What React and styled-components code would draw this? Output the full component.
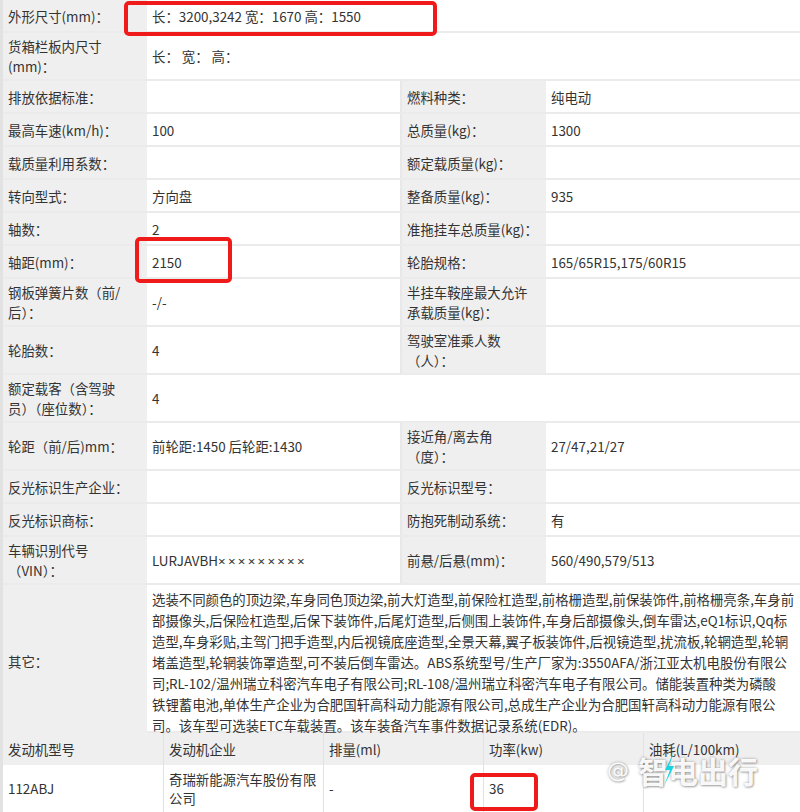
import styled, { createGlobalStyle } from "styled-components"

const GlobalStyle = createGlobalStyle`
  html, body {
    margin: 0;
    padding: 0;
    background: #fff;
  }
`

const Sheet = styled.div`
  position: relative;
  width: 800px;
  height: 812px;
  overflow: hidden;
  font-family: "Noto Sans CJK SC", "Microsoft YaHei", sans-serif;
  font-size: 13.4px;
  color: #333;
  background: #fff;
`

const SpecTable = styled.div`
  border-left: 3px solid #e2e2e2;
`

const rowHeights = { s: 33, m: 48, l: 148 }

const Row = styled.div`
  display: grid;
  grid-template-columns: 144px 255px 144px 1fr;
  box-sizing: border-box;
  height: ${p => rowHeights[p.$size]}px;
  border-bottom: 2px solid #ebebeb;
`

const Label = styled.div`
  display: flex;
  align-items: center;
  padding: 0 5px;
  background: #efefef;
  line-height: 20px;
  white-space: nowrap;
`

const Value = styled.div`
  display: flex;
  align-items: center;
  padding: 0 5px;
  line-height: 20px;
  white-space: nowrap;
  grid-column: ${p => (p.$wide ? "span 3" : "auto")};
  border-right: ${p => (p.$edge ? "2px solid #e8e8e8" : "none")};
`

// masked VIN digits are narrow multiplication signs
const Masked = styled.span`
  font-family: "Noto Sans", "Liberation Sans", sans-serif;
  letter-spacing: 2.2px;
`

const Note = styled.div`
  grid-column: span 3;
  padding: 4px 5px 0;
  line-height: 21px;
`

const NoteLine = styled.span`
  display: block;
  white-space: nowrap;
`

const EngineRow = styled.div`
  display: grid;
  grid-template-columns: 160px 160px 160px 160px 1fr;
  height: ${p => (p.$head ? 32 : 47)}px;
  background: ${p => (p.$head ? "#efefef" : "#fff")};
  border-left: 3px solid #e2e2e2;
`

const EngineCell = styled.div`
  display: flex;
  align-items: center;
  padding: 0 5px;
  line-height: 19px;
  & + & {
    border-left: 1px solid #e2e2e2;
  }
`

const Mark = styled.div`
  position: absolute;
  left: ${p => p.$x}px;
  top: ${p => p.$y}px;
  width: ${p => p.$w}px;
  height: ${p => p.$h}px;
  box-sizing: border-box;
  border: 4px solid #ef1b1b;
  border-radius: 5px;
`

const Watermark = styled.div`
  position: absolute;
  left: 607px;
  top: 748px;
  display: flex;
  align-items: center;
  gap: 9px;
  color: rgba(255, 255, 255, 0.96);
  text-shadow: 0 0 3px rgba(0, 0, 0, 0.35), 1px 1px 2px rgba(0, 0, 0, 0.25);
`

const At = styled.span`
  font-family: "DejaVu Sans", sans-serif;
  font-size: 22px;
`

const Brand = styled.span`
  position: relative;
  font-size: 30px;
  font-weight: 700;
`

const Bolt = styled.svg`
  position: absolute;
  left: 24px;
  top: 4px;
`

const lines = text =>
  text.split("\n").map((t, i, all) => (
    <span key={i}>
      {t}
      {i < all.length - 1 && <br />}
    </span>
  ))

const Cell = ({ as: Comp, children, ...rest }) => (
  <Comp {...rest}>
    <span>{typeof children === "string" ? lines(children) : children}</span>
  </Comp>
)

const specs = [
  { size: "s", l1: "外形尺寸(mm)：", v1: "长：3200,3242 宽：1670 高：1550", wide: true },
  { size: "m", l1: "货箱栏板内尺寸\n(mm)：", v1: "长： 宽： 高：", wide: true },
  { size: "s", l1: "排放依据标准：", v1: "", l2: "燃料种类：", v2: "纯电动" },
  { size: "s", l1: "最高车速(km/h)：", v1: "100", l2: "总质量(kg)：", v2: "1300" },
  { size: "s", l1: "载质量利用系数：", v1: "", l2: "额定载质量(kg)：", v2: "" },
  { size: "s", l1: "转向型式：", v1: "方向盘", l2: "整备质量(kg)：", v2: "935" },
  { size: "s", l1: "轴数：", v1: "2", l2: "准拖挂车总质量(kg)：", v2: "" },
  { size: "s", l1: "轴距(mm)：", v1: "2150", l2: "轮胎规格：", v2: "165/65R15,175/60R15" },
  { size: "m", l1: "钢板弹簧片数（前/\n后）：", v1: "-/-", l2: "半挂车鞍座最大允许\n承载质量(kg)：", v2: "" },
  { size: "m", l1: "轮胎数：", v1: "4", l2: "驾驶室准乘人数\n（人）：", v2: "" },
  { size: "m", l1: "额定载客（含驾驶\n员）（座位数）：", v1: "4", half: true },
  { size: "m", l1: "轮距（前/后)mm：", v1: "前轮距:1450 后轮距:1430", l2: "接近角/离去角\n（度）：", v2: "27/47,21/27" },
  { size: "s", l1: "反光标识生产企业：", v1: "", l2: "反光标识型号：", v2: "" },
  { size: "s", l1: "反光标识商标：", v1: "", l2: "防抱死制动系统：", v2: "有" },
  {
    size: "m",
    l1: "车辆识别代号\n（VIN）：",
    v1: (
      <>
        LURJAVBH<Masked>×××××××××</Masked>
      </>
    ),
    l2: "前悬/后悬(mm)：",
    v2: "560/490,579/513",
  },
]

const noteText = [
  "选装不同颜色的顶边梁,车身同色顶边梁,前大灯造型,前保险杠造型,前格栅造型,前保装饰件,前格栅亮条,车身前",
  "部摄像头,后保险杠造型,后保下装饰件,后尾灯造型,后侧围上装饰件,车身后部摄像头,倒车雷达,eQ1标识,Qq标",
  "造型,车身彩贴,主驾门把手造型,内后视镜底座造型,全景天幕,翼子板装饰件,后视镜造型,扰流板,轮辋造型,轮辋",
  "堵盖造型,轮辋装饰罩造型,可不装后倒车雷达。ABS系统型号/生产厂家为:3550AFA/浙江亚太机电股份有限公",
  "司;RL-102/温州瑞立科密汽车电子有限公司;RL-108/温州瑞立科密汽车电子有限公司。储能装置种类为磷酸",
  "铁锂蓄电池,单体生产企业为合肥国轩高科动力能源有限公司,总成生产企业为合肥国轩高科动力能源有限公",
  "司。该车型可选装ETC车载装置。该车装备汽车事件数据记录系统(EDR)。",
]

const engineHead = ["发动机型号", "发动机企业", "排量(ml)", "功率(kw)", "油耗(L/100km)"]
const engineRow = ["112ABJ", "奇瑞新能源汽车股份有限\n公司", "-", "36", ""]

export default function App() {
  return (
    <Sheet>
      <GlobalStyle />
      <SpecTable>
        {specs.map((r, i) => (
          <Row key={i} $size={r.size}>
            <Cell as={Label}>{r.l1}</Cell>
            {r.wide ? (
              <Cell as={Value} $wide>{r.v1}</Cell>
            ) : (
              <Cell as={Value} $edge={!r.half}>{r.v1}</Cell>
            )}
            {!r.wide && !r.half && <Cell as={Label}>{r.l2}</Cell>}
            {!r.wide && !r.half && <Cell as={Value}>{r.v2}</Cell>}
          </Row>
        ))}
        <Row $size="l">
          <Cell as={Label}>其它：</Cell>
          <Note>
            {noteText.map((t, i) => (
              <NoteLine key={i}>{t}</NoteLine>
            ))}
          </Note>
        </Row>
      </SpecTable>

      <EngineRow $head>
        {engineHead.map(t => (
          <Cell as={EngineCell} key={t}>{t}</Cell>
        ))}
      </EngineRow>
      <EngineRow>
        {engineRow.map((t, i) => (
          <Cell as={EngineCell} key={i}>{t}</Cell>
        ))}
      </EngineRow>

      <Mark $x={124} $y={1} $w={313} $h={35} />
      <Mark $x={135} $y={237} $w={97} $h={46} />
      <Mark $x={470} $y={773} $w={68} $h={38} />

      <Watermark>
        <At>@</At>
        <Brand>
          智电出行
          <Bolt width="14" height="34" viewBox="0 0 14 34">
            <path d="M12 0 L3 18 L8 18 L2 34 L12 14 L7 14 Z" fill="#17d4e3" />
          </Bolt>
        </Brand>
      </Watermark>
    </Sheet>
  )
}
